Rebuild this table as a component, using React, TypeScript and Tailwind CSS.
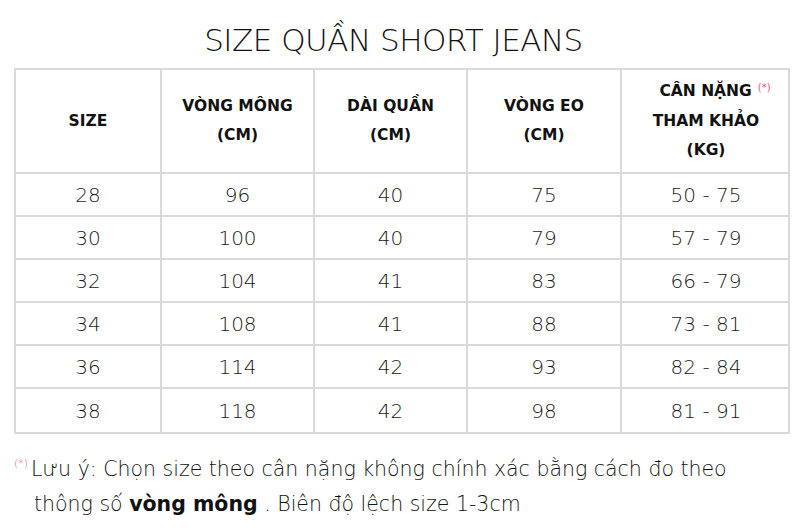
import React from 'react';

const rows = [
  ['28', '96', '40', '75', '50 - 75'],
  ['30', '100', '40', '79', '57 - 79'],
  ['32', '104', '41', '83', '66 - 79'],
  ['34', '108', '41', '88', '73 - 81'],
  ['36', '114', '42', '93', '82 - 84'],
  ['38', '118', '42', '98', '81 - 91'],
];

const cols = 'grid grid-cols-[146px_153px_153px_154px_168px]';

export default function App() {
  return (
    <div className="w-[801px] h-[530px] bg-white text-[#111] font-['DejaVu_Sans',sans-serif] overflow-hidden">
      {/* Title */}
      <div className="h-[68px] flex items-end justify-center pb-[12px]">
        <h1 className="text-[31px] font-light tracking-[-0.5px] leading-none pr-[14px]">SIZE QUẦN SHORT JEANS</h1>
      </div>

      {/* Table */}
      <div className="ml-[14px] w-[776px] border-2 border-[#dadada]">
        <div className={`${cols} h-[104px] border-b-2 border-[#dadada] font-bold text-[15.5px] leading-[29px] text-center`}>
          <div className="flex items-center justify-center border-r-2 border-[#dadada]">SIZE</div>
          <div className="flex items-center justify-center border-r-2 border-[#dadada]">
            <div>VÒNG MÔNG<br />(CM)</div>
          </div>
          <div className="flex items-center justify-center border-r-2 border-[#dadada]">
            <div>DÀI QUẦN<br />(CM)</div>
          </div>
          <div className="flex items-center justify-center border-r-2 border-[#dadada]">
            <div>VÒNG EO<br />(CM)</div>
          </div>
          <div className="flex items-center justify-center">
            <div className="pl-[18px]">
              CÂN NẶNG
              <span className="relative top-[-5px] ml-[6px] text-[10px] font-normal text-[#e8557f]">(*)</span>
              <br /><span className="pr-[18px]">THAM KHẢO</span><br /><span className="pr-[18px]">(KG)</span>
            </div>
          </div>
        </div>
        {rows.map((r, i) => (
          <div
            key={r[0]}
            className={`${cols} h-[43px] text-[20px] font-light text-[#1a1a1a] text-center ${i < rows.length - 1 ? 'border-b-2 border-[#dadada]' : ''}`}
          >
            {r.map((c, j) => (
              <div
                key={j}
                className={`flex items-center justify-center ${j < 4 ? 'border-r-2 border-[#dadada]' : ''}`}
              >
                {c}
              </div>
            ))}
          </div>
        ))}
      </div>

      {/* Note */}
      <div className="mt-[18px] pl-[14px] text-[20.5px] font-light leading-[35px] text-[#111]">
        <div className="flex">
          <span className="text-[11px] text-[#e8557f] leading-none mt-[6px] mr-[3px]">(*)</span>
          <span>Lưu ý: Chọn size theo cân nặng không chính xác bằng cách đo theo</span>
        </div>
        <div className="pl-[20px]">
          thông số <span className="font-bold">vòng mông</span> . Biên độ lệch size 1-3cm
        </div>
      </div>
    </div>
  );
}
